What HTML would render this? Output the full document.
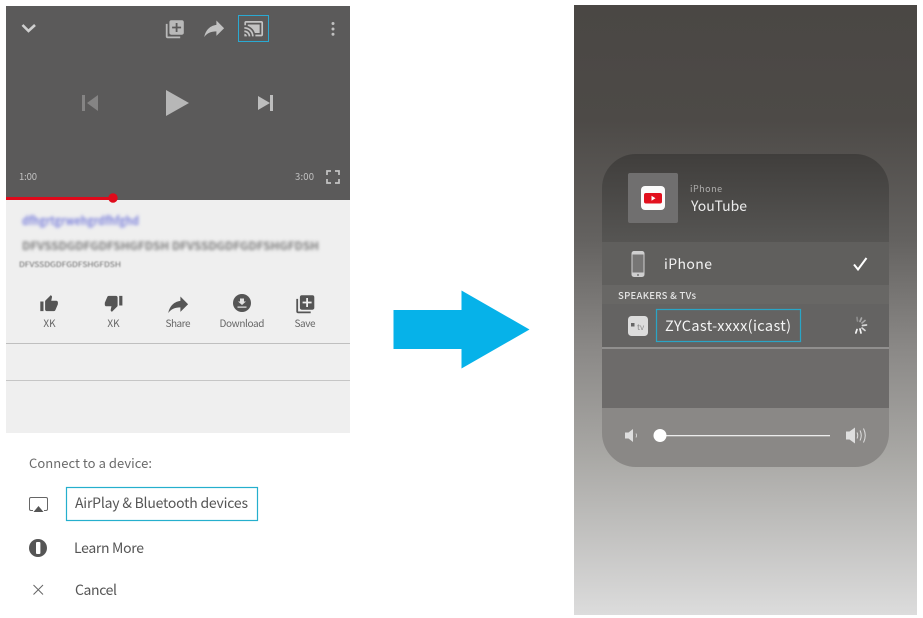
<!DOCTYPE html>
<html lang="en">
<head>
<meta charset="utf-8">
<title>Cast to a device</title>
<style>
html,body{margin:0;padding:0;background:#fff;width:923px;height:618px;overflow:hidden}
svg{display:block}
text{font-family:"Noto Sans CJK JP","Liberation Sans",sans-serif}
</style>
</head>
<body>
<svg width="923" height="618" viewBox="0 0 923 618" xmlns="http://www.w3.org/2000/svg">
<defs>
<linearGradient id="bg" x1="0" y1="5" x2="0" y2="615" gradientUnits="userSpaceOnUse">
<stop offset="0" stop-color="#4a4744"/>
<stop offset=".19" stop-color="#4d4a47"/>
<stop offset=".385" stop-color="#646260"/>
<stop offset=".566" stop-color="#8b8987"/>
<stop offset=".74" stop-color="#a9a8a5"/>
<stop offset="1" stop-color="#dcdcdc"/>
</linearGradient>
<linearGradient id="top" x1="0" y1="154" x2="0" y2="242" gradientUnits="userSpaceOnUse">
<stop offset="0" stop-color="#403e3c"/>
<stop offset="1" stop-color="#565553"/>
</linearGradient>
<clipPath id="panel"><rect x="602" y="154" width="287" height="313" rx="34"/></clipPath>
<filter id="b1" x="-5%" y="-80%" width="110%" height="260%"><feGaussianBlur stdDeviation="1.5"/></filter>
<filter id="b2" x="-5%" y="-80%" width="110%" height="260%"><feGaussianBlur stdDeviation="0.8"/></filter>
<filter id="soft" x="-5%" y="-5%" width="110%" height="110%"><feGaussianBlur stdDeviation="0.35"/></filter>
</defs>

<!-- left screen -->
<rect x="6" y="6" width="344" height="427" fill="#efefef"/>
<rect x="6" y="6" width="344" height="194" fill="#5b5a5a"/>

<g filter="url(#soft)">
<polyline points="22.5,25 28.5,31 35,25" fill="none" stroke="#d0d0d0" stroke-width="2.6"/>
<path transform="translate(164,18.5) scale(.9)" fill="#b9b9b9" d="M4 6H2v14c0 1.1.9 2 2 2h14v-2H4V6zm16-4H8c-1.1 0-2 .9-2 2v12c0 1.1.9 2 2 2h12c1.1 0 2-.9 2-2V4c0-1.1-.9-2-2-2zm-1 9h-4v4h-2v-4H9V9h4V5h2v4h4v2z"/>
<path transform="translate(201,15) scale(1.1)" fill="#c2c2c2" d="M14 9V5l7 7-7 7v-4.1c-5 0-8.5 1.6-11 5.1 1-5 4-10 11-11z"/>
<path transform="translate(243.5,18.5) scale(.85)" fill="#c4c4c4" d="M21 3H3c-1.1 0-2 .9-2 2v3h2V5h18v14h-7v2h7c1.1 0 2-.9 2-2V5c0-1.1-.9-2-2-2zM1 18v3h3c0-1.66-1.34-3-3-3zm0-4v2c2.76 0 5 2.24 5 5h2c0-3.87-3.13-7-7-7zm0-4v2c4.97 0 9 4.03 9 9h2c0-6.08-4.93-11-11-11zM19 7H5v1.63c3.96 1.28 7.09 4.41 8.37 8.37H19V7z"/>
<circle cx="333" cy="23.5" r="1.5" fill="#c0c0c0"/><circle cx="333" cy="29" r="1.5" fill="#c0c0c0"/><circle cx="333" cy="34.2" r="1.5" fill="#c0c0c0"/>
<path fill="#858484" d="M82 95h3v16h-3zM98 95v16l-11-8z"/>
<path fill="#b7b7b7" d="M166 90l23 13-23 13z"/>
<path fill="#bdbdbd" d="M258 96l12 7-12 7zM270 95h3v16h-3z"/>
<path fill="none" stroke="#c4c4c4" stroke-width="1.700" d="M327 175v-4h4M335 171h4v4M339 179v4h-4M331 183h-4v-4"/>
</g>
<rect x="238.500" y="15.500" width="30" height="26" fill="none" stroke="#2aa9d2" stroke-width="1"/>

<text x="19" y="180" font-size="9.500" fill="#c0c0c0" textLength="18">1:00</text>
<text x="295" y="180" font-size="9.500" fill="#c0c0c0" textLength="19">3:00</text>

<rect x="6" y="197" width="107" height="3" fill="#e00a1b"/>
<circle cx="113" cy="198" r="4.700" fill="#e00a1b"/>

<!-- blurred title/description -->
<text x="22" y="225" font-size="12" font-weight="700" fill="#7f84dc" filter="url(#b1)" textLength="117" lengthAdjust="spacingAndGlyphs">dfhgrtgrwehgrdfhfghd</text>
<text x="22" y="250" font-size="11" font-weight="700" fill="#7c7c7c" filter="url(#b1)" textLength="297" lengthAdjust="spacingAndGlyphs">DFVSSDGDFGDFSHGFDSH DFVSSDGDFGDFSHGFDSH</text>
<text x="19" y="267" font-size="7" fill="#666" filter="url(#b2)" textLength="102" lengthAdjust="spacingAndGlyphs">DFVSSDGDFGDFSHGFDSH</text>

<!-- action row -->
<g fill="#555555" filter="url(#soft)">
<path transform="translate(39.500,294.300) scale(.8)" d="M1 21h4V9H1v12zm22-11c0-1.100-.9-2-2-2h-6.310l.95-4.570.03-.32c0-.41-.17-.79-.44-1.060L14.170 1 7.590 7.590C7.220 7.950 7 8.450 7 9v10c0 1.100.9 2 2 2h9c.83 0 1.540-.5 1.840-1.220l3.020-7.050c.09-.23.14-.47.14-.73v-2z"/>
<path transform="translate(104,293.500) scale(.8)" d="M15 3H6c-.83 0-1.540.5-1.840 1.220l-3.020 7.050c-.09.23-.14.47-.14.73v2c0 1.100.9 2 2 2h6.310l-.95 4.570-.03.32c0 .41.17.79.44 1.060L9.830 23l6.590-6.590c.36-.36.58-.86.58-1.410V5c0-1.100-.9-2-2-2zm4 0v12h4V3h-4z"/>
<path transform="translate(165,291) scale(1.100)" d="M14 9V5l7 7-7 7v-4.100c-5 0-8.500 1.600-11 5.100 1-5 4-10 11-11z"/>
<circle cx="242" cy="303" r="9"/>
<path transform="translate(294.500,293.500) scale(.9)" d="M4 6H2v14c0 1.100.9 2 2 2h14v-2H4V6zm16-4H8c-1.100 0-2 .9-2 2v12c0 1.100.9 2 2 2h12c1.100 0 2-.9 2-2V4c0-1.100-.9-2-2-2zm-1 9h-4v4h-2v-4H9V9h4V5h2v4h4v2z"/>
</g>
<path fill="#e2e2e2" d="M240 298.500h4v3h2l-4 3.500-4-3.500h2zM237.500 306.500h9v1.300h-9z"/>
<g font-size="10" fill="#666" text-anchor="middle">
<text x="49.500" y="327">XK</text>
<text x="113.500" y="327">XK</text>
<text x="178" y="327" textLength="25">Share</text>
<text x="242" y="327" textLength="45">Download</text>
<text x="305" y="327" textLength="21">Save</text>
</g>
<rect x="6" y="343" width="344" height="1" fill="#bfbfbf"/>
<rect x="6" y="380" width="344" height="1" fill="#c6c6c6"/>

<!-- lower menu -->
<text x="29" y="468" font-size="13" fill="#6a6a6a" textLength="123">Connect to a device:</text>
<path fill="none" stroke="#666" stroke-width="1" d="M33 510.500h-2a1.500 1.500 0 0 1-1.500-1.500v-10a1.500 1.500 0 0 1 1.500-1.500h15a1.500 1.500 0 0 1 1.500 1.500v10a1.500 1.500 0 0 1-1.500 1.500h-2"/>
<path fill="#555" d="M38.500 506l5 6h-10z"/>
<rect x="66.500" y="487.500" width="191" height="33" fill="none" stroke="#25afcd" stroke-width="1.200"/>
<text x="75" y="508" font-size="14" fill="#555" textLength="173">AirPlay &amp; Bluetooth devices</text>
<circle cx="38" cy="548" r="9" fill="#555"/>
<rect x="36" y="542" width="4.400" height="12" rx="1" fill="#fff"/>
<text x="74" y="553" font-size="14" fill="#555" textLength="70">Learn More</text>
<path fill="none" stroke="#666" stroke-width="1" d="M33.500 585l9.500 9.500M43 585l-9.500 9.500"/>
<text x="75" y="595" font-size="14" fill="#555" textLength="42">Cancel</text>

<!-- arrow -->
<polygon points="393.500,310 461.500,310 461.500,290.500 529.500,329.500 461.500,368.500 461.500,349 393.500,349" fill="#06b2e9"/>

<!-- right screen -->
<rect x="574" y="5" width="343" height="610" fill="url(#bg)"/>
<g clip-path="url(#panel)">
<rect x="602" y="154" width="287" height="88" fill="url(#top)"/>
<rect x="602" y="242" width="287" height="43" fill="#605f5d"/>
<rect x="602" y="285" width="287" height="19" fill="#686765"/>
<rect x="602" y="304" width="287" height="43" fill="#646362"/>
<rect x="602" y="347" width="287" height="2" fill="#908f8e"/>
<rect x="602" y="349" width="287" height="59" fill="#6d6b6a"/>
<rect x="602" y="408" width="287" height="59" fill="#8a8886"/>
</g>

<rect x="628" y="173" width="50" height="50" rx="2" fill="#706f6f"/>
<rect x="641" y="186" width="24" height="24" rx="4" fill="#fbfbfb"/>
<rect x="644" y="193" width="18" height="10.500" rx="2" fill="#e2101e"/>
<path fill="#fff" d="M651.500 195.800l4 2.500-4 2.500z"/>
<text x="690" y="192" font-size="9" fill="#b0afae" letter-spacing=".5">iPhone</text>
<text x="691" y="211" font-size="14" fill="#ececec" textLength="56">YouTube</text>

<!-- iPhone row -->
<rect x="631.500" y="251" width="13" height="26" rx="2.500" fill="#cfcfcf"/>
<rect x="632.500" y="254.500" width="11" height="18" fill="#777675"/>
<circle cx="638" cy="275" r="1" fill="#777"/>
<text x="664" y="269" font-size="14" fill="#f2f2f2" textLength="48">iPhone</text>
<polyline points="854,264.500 858,269.500 866.500,258" fill="none" stroke="#fff" stroke-width="2"/>

<text x="618" y="299" font-size="9.500" fill="#e6e6e6" font-weight="500" textLength="78">SPEAKERS &amp; TVs</text>

<!-- device row -->
<rect x="628" y="316" width="20" height="20" rx="3.500" fill="#dcdcdc"/>
<rect x="631" y="323" width="3.500" height="3.500" fill="#666"/>
<text x="637" y="330" font-size="8" fill="#8a8a8a">tv</text>
<rect x="656.500" y="309.500" width="144" height="32" fill="none" stroke="#2aa5c6" stroke-width="1.200"/>
<text x="665" y="331" font-size="14.500" fill="#f5f5f5" textLength="126">ZYCast-xxxx(icast)</text>
<g stroke-width="1.700" stroke-linecap="round">
<path stroke="#f4f4f4" d="M860 329l1 4M857 329.500l-1.200 3.500"/>
<path stroke="#d8d8d8" d="M862 328l3 2.500M862.500 325.500l4-.5"/>
<path stroke="#a8a8a8" d="M862 323l3-2.500M860 321.500l1.500-3.500"/>
<path stroke="#8d8d8d" d="M857.500 321l-.5-3.500"/>
</g>

<!-- volume -->
<path fill="#dedede" d="M625 432.500h3.500l4.500-3.500v13l-4.500-3.500h-3.500z"/>
<path fill="none" stroke="#dedede" stroke-width=".8" d="M636 433.500q1 2 0 4"/>
<rect x="660" y="435" width="170" height="1.300" fill="#ececec"/>
<circle cx="660" cy="435.500" r="6.500" fill="#fff"/>
<path fill="#dedede" d="M846 431.500h3.500l5.500-4v16l-5.500-4h-3.500z"/>
<path fill="none" stroke="#dedede" stroke-width="1" d="M857 432.500q1.500 3 0 6M860 430.500q2.500 5 0 10M863.500 428.500q3.500 7 0 14"/>
</svg>
</body>
</html>
